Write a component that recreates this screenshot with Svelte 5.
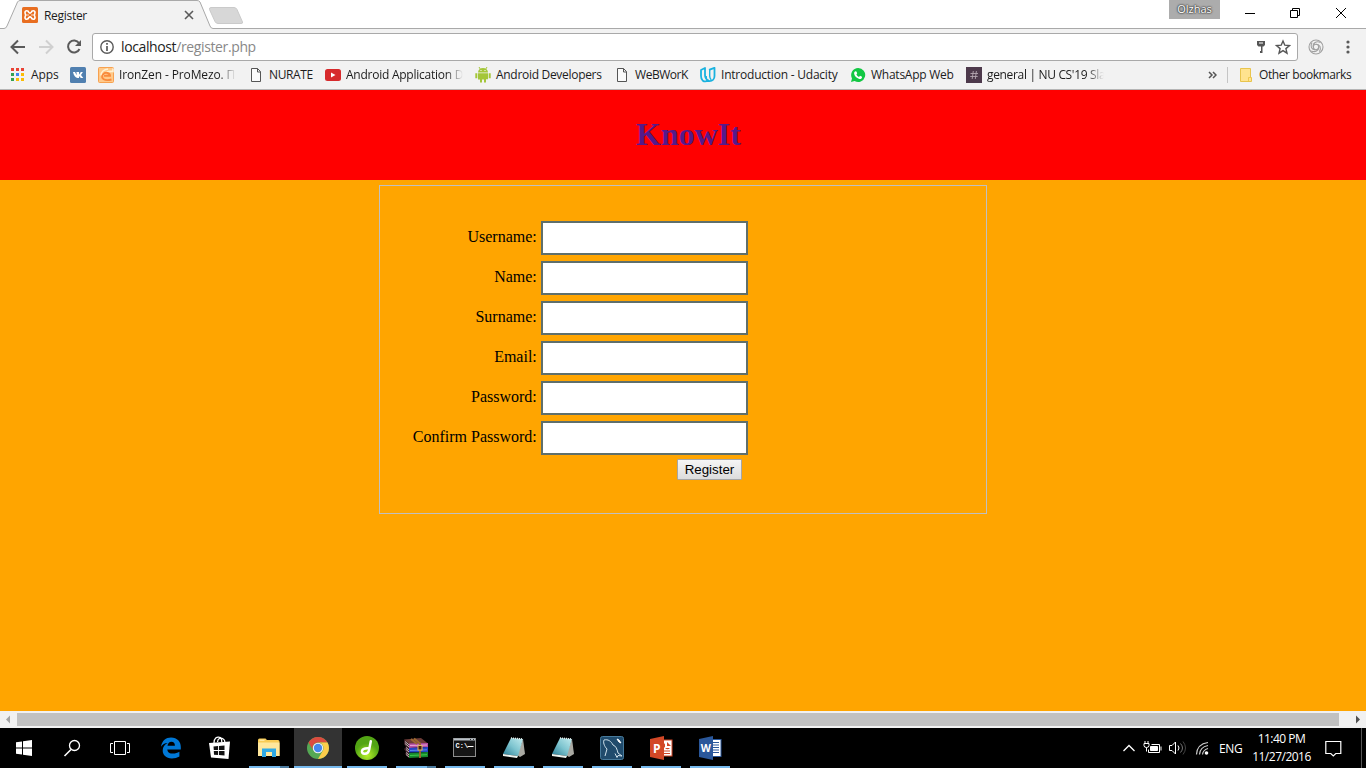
<script>
  const bookmarks = [
    { icon: 'apps', label: 'Apps', w: 27, ls: -0.1 },
    { icon: 'vk', label: '', w: 0 },
    { icon: 'iron', label: 'IronZen - ProMezo. Пр', w: 117, fade: true, ls: -0.12 },
    { icon: 'doc', label: 'NURATE', w: 44, ls: -0.4 },
    { icon: 'youtube', label: 'Android Application D', w: 117, fade: true, ls: -0.25 },
    { icon: 'android', label: 'Android Developers', w: 106, ls: -0.3 },
    { icon: 'doc', label: 'WeBWorK', w: 53, ls: -0.45 },
    { icon: 'udacity', label: 'Introduction - Udacity', w: 117, ls: -0.22 },
    { icon: 'whatsapp', label: 'WhatsApp Web', w: 83, ls: -0.25 },
    { icon: 'slack', label: "general | NU CS'19 Sla", w: 117, fade: true, ls: -0.33 }
  ];
  const appColors = ['#e94335', '#e94335', '#e94335', '#34a153', '#4285f4', '#fbbc05', '#34a153', '#fbbc05', '#fbbc05'];
  const fields = [
    { id: 'username', label: 'Username:', type: 'text' },
    { id: 'name', label: 'Name:', type: 'text' },
    { id: 'surname', label: 'Surname:', type: 'text' },
    { id: 'email', label: 'Email:', type: 'text' },
    { id: 'password', label: 'Password:', type: 'password' },
    { id: 'confirm', label: 'Confirm Password:', type: 'password' }
  ];
  const tasks = [
    { icon: 'edge' },
    { icon: 'store' },
    { icon: 'explorer', open: true, multi: true },
    { icon: 'chrome', open: true, active: true },
    { icon: 'disc', open: true },
    { icon: 'winrar', open: true, multi: true },
    { icon: 'cmd', open: true },
    { icon: 'notepad', open: true },
    { icon: 'notepad', open: true },
    { icon: 'mysql', open: true },
    { icon: 'ppt', open: true },
    { icon: 'word', open: true }
  ];
</script>

{#snippet bookmarkIcon(name)}
  <svg class="bm-icon" width="16" height="16" viewBox="0 0 16 16">
    {#if name === 'apps'}
      {#each appColors as c, i}
        <rect x={2 + (i % 3) * 5} y={1 + Math.floor(i / 3) * 5} width="3" height="3" fill={c} />
      {/each}
    {:else if name === 'vk'}
      <rect width="16" height="16" rx="1.5" fill="#5180b0" />
      <path d="M3 5h2l1.6 3.2V5.6L6 5h3v2.7L10.8 5h2.1L11 8l2.3 3h-2.4L9 9v2H7.700C5.400 11 3.800 8.500 3 5z" fill="#fff" />
    {:else if name === 'iron'}
      <rect x=".5" y=".5" width="15" height="15" rx="1" fill="#ffc98a" stroke="#f7a14f" />
      <path d="M15 1.500v3C9.500 4 6.500 6 5.500 9M3 8.500C3 5 6 2.500 10 2" fill="none" stroke="#fff1d4" stroke-width="1.600" />
      <path d="M6 8.800h6C12 6 7.500 4.500 5 7.500c-2.500 4 1.500 7 8.500 5" fill="none" stroke="#f98a3c" stroke-width="1.900" />
    {:else if name === 'doc'}
      <path d="M3.500 1.500h6l3 3v10h-9zM9.500 1.500v3.500h3" fill="#fafafa" stroke="#555" />
    {:else if name === 'youtube'}
      <rect y="2" width="16" height="12" rx="2.500" fill="#d72a2c" />
      <path d="M6 5.500v5l4.500-2.500z" fill="#fff" />
    {:else if name === 'android'}
      <path d="M3 5.500a5 4.500 0 0 1 10 0zM3 6.200h10v6H11V15.500H9v-3H7v3H5v-3H3zM.3 6.200h2v5h-2zM13.700 6.200h2v5h-2z" fill="#a4c639" />
      <path d="M4 0l1.500 2.500M12 0l-1.500 2.500" stroke="#a4c639" />
      <path d="M5.500 3h1v1h-1zM9.500 3h1v1h-1z" fill="#fff" />
    {:else if name === 'udacity'}
      <path d="M1 3l4-2v7c0 3 1.200 4.500 3.500 5.500C3.500 16 1 13 1 9zM9 2.800l5.500-2V9c0 3-2 5.200-5 5.200S6 12 6 9" fill="none" stroke="#19b2df" stroke-width="1.800" stroke-linejoin="round" />
      <path d="M9.700 3v6c0 2 .6 3 1.600 4" fill="none" stroke="#19b2df" stroke-width="1.400" />
    {:else if name === 'whatsapp'}
      <path d="M8.100 1a7 7 0 1 1-3.500 13L1 15l1-3.600A7 7 0 0 1 8.100 1z" fill="#12c743" />
      <path d="M5.300 4.300l1.100.1.800 1.900-.8 1.100c.6 1.200 1.400 1.900 2.600 2.500l1-1.100 2 .9c.2 1.800-1.300 2.500-2.700 2.200C6.500 11.200 4.600 9 4.200 7c-.2-1.200.2-2.200 1.100-2.700z" fill="#fff" />
    {:else if name === 'slack'}
      <rect width="16" height="16" fill="#4d394b" />
      <path d="M7.300 4L6.200 12M10.400 4L9.300 12M4.500 6.500h7.500M4.200 9.500h7.500" stroke="#b3a6b0" stroke-width=".9" />
    {:else if name === 'folder'}
      <path d="M2.500 1.500h10v9h1v4h-11z" fill="#ffe38f" stroke="#e8c44d" />
      <path d="M10.500 14v-3.500h2.500" fill="none" stroke="#f0c94f" />
    {/if}
  </svg>
{/snippet}

{#snippet taskIcon(name)}
  <svg width="24" height="24" viewBox="0 0 24 24">
    {#if name === 'edge'}
      <path d="M2 10.700C3 4.500 7 1.500 12 1.500c6.300 0 9.800 4.300 9.800 9.500v2.400H8.300c.3 3 2.700 4.200 5.900 4.200 2.200 0 4.200-.6 6.200-1.800v4.700c-2.200 1.300-4.700 1.900-7.500 1.900-6 0-9.200-3.300-9.200-7.800 0-3.500 1.900-6.200 5-7.500C5.500 7.200 3.500 8.500 2 10.700zM8.500 9.700h7.400c0-2.500-1.200-4-3.500-4S8.800 7.400 8.500 9.700z" fill="#0078d7" />
    {:else if name === 'store'}
      <path d="M6 7C6 2 9 .8 11 1.200c2 .3 2.800 2 2.800 5M9.500 6c.3-4 3.500-4.500 5.500-3.300C16.500 3.500 17 5 17 7" fill="none" stroke="#fff" stroke-width="1.300" />
      <path d="M1 7l21-1.500L20.500 23 3 21.500z" fill="#fff" />
      <path d="M5.500 10.500l4.600-.4v4H5.800zM11 10l5.500-.4V14H11zM5.800 15h4.300v4l-4.100-.3zM11 15h5.500v4.400L11 19z" fill="#111" />
    {:else if name === 'explorer'}
      <path d="M1 4q0-1.500 1.500-1.500h6L10 4h11q1.500 0 1.500 1.500V20H1z" fill="#f8cb55" />
      <path d="M1 6.500h21.500V20H1z" fill="#ffe79c" />
      <path d="M5 21v-8.500h14V21h-4v-5H9v5z" fill="#2fa9e5" />
      <path d="M2.500 4.200h5" stroke="#fff3c2" />
    {:else if name === 'chrome'}
      <circle cx="12" cy="12" r="11" fill="#55a854" />
      <path d="M2.500 6.500A11 11 0 0 1 21.500 6.500H12a5.500 5.500 0 0 0-4.760 8.250z" fill="#db4b3f" />
      <path d="M21.500 6.500A11 11 0 0 1 12 23l4.760-8.250A5.500 5.500 0 0 0 12 6.500z" fill="#fccd4b" />
      <circle cx="12" cy="12" r="5.200" fill="#f4f4f4" />
      <circle cx="12" cy="12" r="4.200" fill="#4587ed" />
    {:else if name === 'disc'}
      <defs><radialGradient id="green" cy=".8"><stop stop-color="#b7f02a" /><stop offset="1" stop-color="#52a414" /></radialGradient></defs>
      <circle cx="12" cy="12" r="12" fill="url(#green)" />
      <path d="M15.800 5.200l-1.600 8.300c-.6 3-2.500 4.300-4.700 4.200-2-.1-2.800-1.200-2.500-2.700.5-2.300 3-3 7-2.700" fill="none" stroke="#fff" stroke-width="2.500" stroke-linecap="round" />
    {:else if name === 'winrar'}
      <path d="M0 3.500L17 2l7 5.500-19 .5z" fill="#6d3b37" />
      <path d="M5 7.500l19-.5v4l-19 1z" fill="#b650a4" />
      <path d="M5 12l19-1v5l-19 .5z" fill="#2645c4" />
      <path d="M5 17l19-1v5L5 22z" fill="#17882c" />
      <path d="M6 9.500l17-.5" stroke="#e7a2d7" />
      <path d="M6 14.500l17-.7" stroke="#5c86ed" />
      <path d="M6 19.500l17-.8" stroke="#3ccb4d" />
      <path d="M0 3.500L5 8v14l-4-4 1-2-2-3 2-2-2-3z" fill="#41242d" />
      <path d="M1 5.500l4 3.300M1 7.500l4 3.300M2 11.500l3 2.500M2 13.500l3 2.500M2 16.500l3 2.500M2 18.500l3 2.500" stroke="#d6c8cb" stroke-width=".9" />
      <path d="M10 2.500l6 5V22M7 3l6 5" fill="none" stroke="#9c6830" stroke-width="1.900" />
      <rect x="14" y="9.500" width="4" height="4.500" fill="#44210b" stroke="#dfb469" />
    {:else if name === 'cmd'}
      <rect x=".5" y="2.500" width="22" height="18" fill="#151515" stroke="#8d8d8d" />
      <path d="M1 3.500h21" stroke="#b9c1c8" stroke-width="2" />
      <path d="M17 3.500h1M20 3.500h1" stroke="#333" />
      <text x="2.500" y="11.500" class="prompt">C:\</text>
      <path d="M14.500 10.500h6" stroke="#fff" />
    {:else if name === 'notepad'}
      <defs><linearGradient id="note" x1="1" y1="0" x2="0" y2="1"><stop stop-color="#c3ecef" /><stop offset=".5" stop-color="#7dc4cf" /><stop offset="1" stop-color="#287c95" /></linearGradient></defs>
      <path d="M21 3l2 15-5 3-3-2z" fill="#a9a9a2" />
      <path d="M9 2l12 1-5 17L1 18z" fill="url(#note)" />
      <path d="M1 18l15 2-1 2L1 20z" fill="#eef3ef" />
      <path d="M9 2l12 1" stroke="#e6efee" stroke-width="1.500" stroke-dasharray="1 1" />
    {:else if name === 'mysql'}
      <rect x=".5" y=".5" width="23" height="23" rx="2" fill="#204b6c" stroke="#477a9b" />
      <path d="M5 20L7 13C4 10 3 6 4 4c4-1 7 1 9 5 3 1 4 4 5 8l4 3-4-.5-1 2-2-4" fill="none" stroke="#cfe1eb" stroke-width="1" />
      <path d="M17 3l2 1 2 3-2-1z" fill="#fff" stroke="#fff" />
    {:else if name === 'ppt'}
      <rect x="12" y="4" width="11" height="16" fill="#fff" stroke="#d24726" />
      <path d="M18 6v4h4M16 7a3.500 3.500 0 1 0 5 5h-5z" fill="#d24726" />
      <path d="M14 15h7M14 17.500h7" stroke="#d24726" />
      <path d="M1 3l14-3v24L1 21z" fill="#d24726" />
      <text x="4" y="16.500" class="office">P</text>
    {:else if name === 'word'}
      <rect x="12" y="3.500" width="11" height="17" fill="#fff" stroke="#2a579a" />
      <path d="M14 6.500h7M14 9h7M14 11.500h7M14 14h7M14 16.500h7" stroke="#2a579a" />
      <path d="M1 3l14-3v24L1 21z" fill="#2a579a" />
      <text x="2.800" y="16" class="office w">W</text>
    {/if}
  </svg>
{/snippet}

<div class="screen">
  <header class="titlebar">
    <svg class="tabshape" width="1366" height="29" viewBox="0 0 1366 29">
      <path d="M0 28.500H4Q6 28.500 7 26L17.500 2Q18.500 .5 20 .5H197Q199 .5 200 2L210 26Q211 28.500 213 28.500H1366V29H0z" fill="#f2f2f2" />
      <path d="M0 28.500H4Q6 28.500 7 26L17.500 2Q18.500 .5 20 .5H197Q199 .5 200 2L210 26Q211 28.500 213 28.500H1366" fill="none" stroke="#a9a9a9" />
      <path d="M211 7.500h23q2 0 3 2l5.500 12.500q.5 1.500-1.500 1.500h-23q-2 0-3-2L209.500 9.500q-.5-2 1.500-2z" fill="#d7d7d7" stroke="#cacaca" />
    </svg>
    <div class="tab">
      <svg width="16" height="16" viewBox="0 0 16 16">
        <rect width="16" height="16" rx="1.500" fill="#e86e20" />
        <path d="M6.700 5.500Q6.500 3.800 4.700 3.800 3 3.800 3 5.800T4.500 8Q3 8.200 3 10.200t1.700 2 2-1.700M9.300 5.500q.2-1.700 2-1.700 1.700 0 1.700 2T11.500 8q1.500.2 1.500 2.200t-1.700 2-2-1.700M6.700 5.300Q8 7 9.300 5.300M6.700 10.700Q8 9 9.300 10.700M5.500 8h1M9.500 8h1" fill="none" stroke="#fff" stroke-width="1.600" />
      </svg>
      <span class="tab-title">Register</span>
      <svg width="10" height="10" viewBox="0 0 10 10"><path d="M1 1l8 8M9 1L1 9" stroke="#5a5a5a" stroke-width="1.600" /></svg>
    </div>
    <div class="window-controls">
      <span class="profile">Olzhas</span>
      <svg width="102" height="26" viewBox="0 0 102 26" fill="none" stroke="#000">
        <path d="M0 13.500h10M45.500 10.500h7v7h-7zM47.500 10v-1.500h7v7h-2M91 8l10 10M101 8L91 18" />
      </svg>
    </div>
  </header>

  <nav class="toolbar">
    <svg class="nav-icons" width="76" height="20" viewBox="0 0 76 20" fill="none" stroke-width="2">
      <path d="M16 10H3M9 3.500L2.500 10 9 16.500" stroke="#5a5a5a" />
      <path d="M30 10h13M37 3.500l6.500 6.500-6.500 6.500" stroke="#d0d0d0" />
      <path d="M70 6a6 6 0 1 0 .5 6" stroke="#5a5a5a" />
      <path d="M72 3v6h-6z" fill="#5a5a5a" />
    </svg>
    <div class="address">
      <svg width="14" height="14" viewBox="0 0 14 14"><circle cx="7" cy="7" r="6.200" fill="none" stroke="#5a5a5a" stroke-width="1.400" /><path d="M7 3v1.800M7 6v5" stroke="#5a5a5a" stroke-width="1.700" /></svg>
      <span class="url">localhost<i>/register.php</i></span>
      <svg width="36" height="18" viewBox="0 0 36 18">
        <path d="M2 3h8v4L8.500 8.500h-1V15H5V13h1V8.500H3.500L2 7z" fill="#555" /><path d="M4 5h4" stroke="#fff" />
        <path d="M28 3l1.800 4.200 4.700.4-3.600 3 1.100 4.600-4-2.500-4 2.500 1.100-4.600-3.600-3 4.700-.4z" fill="none" stroke="#555" stroke-width="1.400" />
      </svg>
    </div>
    <svg class="ext" width="16" height="16" viewBox="0 0 16 16" fill="none" stroke="#a0a0a0" stroke-width="1.100">
      <circle cx="8" cy="8" r="7" /><circle cx="8" cy="8" r="2.700" /><path d="M5.300 8C4.500 4 8.500 1.500 12.500 3.500M8 5.300c4 0 5.500 3.500 3.500 7.500M10.700 8c0 4-3.500 5.500-7.500 4M7 10.600C3.500 11 2 7 4 3.500" />
    </svg>
    <svg class="dots" width="4" height="14" viewBox="0 0 4 14" fill="#5a5a5a"><circle cx="2" cy="2" r="1.600" /><circle cx="2" cy="7" r="1.600" /><circle cx="2" cy="12" r="1.600" /></svg>
  </nav>

  <nav class="bookmarks">
    {#each bookmarks as b}
      <div class="bookmark">
        {@render bookmarkIcon(b.icon)}
        {#if b.label}
          <span class:fade={b.fade} style="width:{b.w}px;letter-spacing:{b.ls}px">{b.label}</span>
        {/if}
      </div>
    {/each}
    <div class="other">
      <svg width="9" height="8" viewBox="0 0 9 8" fill="none" stroke="#555" stroke-width="1.500"><path d="M1 1l3 3-3 3M5 1l3 3-3 3" /></svg>
      <i class="divider"></i>
      {@render bookmarkIcon('folder')}
      <span>Other bookmarks</span>
    </div>
  </nav>

  <main>
    <div class="banner"><h1>KnowIt</h1></div>
    <form onsubmit={(e) => e.preventDefault()}>
      {#each fields as f}
        <div class="row">
          <label for={f.id}>{f.label}</label>
          <input id={f.id} type={f.type} />
        </div>
      {/each}
      <button>Register</button>
    </form>
  </main>

  <div class="scrollbar">
    <svg width="17" height="17" viewBox="0 0 17 17"><path d="M10 4.500v8L6 8.500z" fill="#a3a3a3" /></svg>
    <div class="thumb"></div>
    <svg width="17" height="17" viewBox="0 0 17 17"><path d="M7 4.500v8l4-4z" fill="#505050" /></svg>
  </div>

  <footer>
    <svg class="system" width="147" height="40" viewBox="0 0 147 40">
      <path d="M16 14.300l6-.8v6H16zM23 13.300l9-1.300v7.500h-9zM16 20.500h6v6l-6-.8zM23 20.500h9V28l-9-1.300z" fill="#fff" />
      <g fill="none" stroke="#fff"><circle cx="74.500" cy="17.500" r="5" stroke-width="1.300" /><path d="M71 21.500L64.500 28" stroke-width="1.600" /><path d="M114.500 13.500h11v13h-11zM113 15.500h-2.500v9h2.500M127 15.500h2.500v9H127" /></g>
    </svg>
    <div class="tasks">
      {#each tasks as t}
        <div class="task" class:open={t.open} class:active={t.active} class:multi={t.multi}>{@render taskIcon(t.icon)}</div>
      {/each}
    </div>
    <div class="tray">
      <svg width="90" height="40" viewBox="0 0 90 40" fill="none" stroke="#fff">
        <path d="M1.500 23L7 17.500l5.500 5.500" stroke-width="1.300" />
        <path d="M29.500 16.500h8v8h-11v-3M39 18.500v4" /><path d="M28.500 18.500h7v4h-7z" fill="#fff" />
        <path d="M23 13v2.500M26 13v2.500M22 15.500h5v2q0 2-2.500 2t-2.500-2zM24.500 19.500v4" />
        <path d="M47.500 17.500h2.500l3.500-3.500v12L50 22.500h-2.500z" /><path d="M56 17.500q2 2.500 0 5" /><path d="M58.500 15.500q4 4.500 0 9" stroke="#777" /><path d="M61 13.500q5 6.500 0 13" stroke="#444" />
        <path d="M74.500 26.500Q75 16 86 14.500M77.500 26.500Q78 19 86 17.500M80.500 26.500Q81 22 86 20.500" stroke="#ccc" stroke-width="1.200" /><circle cx="84.500" cy="25" r="1.800" fill="#fff" stroke="none" />
      </svg>
      <span class="lang">ENG</span>
      <span class="clock">11:40 PM<br />11/27/2016</span>
      <svg class="notice" width="17" height="17" viewBox="0 0 17 17" fill="none" stroke="#fff"><path d="M.8 1.500h15v12h-5L8.300 16l-2.500-2.500h-5z" stroke-width="1.200" /></svg>
      <i class="desktop"></i>
    </div>
  </footer>
</div>

<style>
  :global(body) { margin: 0; overflow: hidden; }
  .screen { width: 1366px; height: 768px; display: flex; flex-direction: column; overflow: hidden; font: 12px 'Open Sans', 'Noto Sans', sans-serif; color: #1c1c1c; }
  svg { display: block; flex: none; }
  i { font-style: normal; }
  .titlebar { height: 29px; display: grid; grid-template-columns: 1fr auto; background: #fff; }
  .tabshape { grid-area: 1 / 1 / 2 / 3; }
  .tab { grid-area: 1 / 1; display: flex; align-items: center; padding: 1px 0 0 22px; width: 172px; }
  .tab-title { flex: 1; padding-left: 6px; letter-spacing: -0.3px; }
  .window-controls { grid-area: 1 / 2; display: flex; align-items: flex-start; gap: 25px; padding-right: 19px; }
  .profile { width: 51px; height: 19px; background: #acacac; color: #fff; text-align: center; font-size: 11px; line-height: 18px; text-shadow: 0 0 2px #333, 0 0 1px #333, 0 0 2px #444; }
  .toolbar { height: 36px; display: flex; align-items: center; padding-left: 9px; background: #f2f2f2; box-sizing: border-box; }
  .address { flex: none; display: flex; align-items: center; box-sizing: border-box; width: 1206px; height: 28px; margin-left: 7px; border: 1px solid #a9a9a9; border-radius: 3px; background: #fff; padding: 0 6px 0 7px; }
  .url { flex: 1; font-size: 14px; line-height: 18px; padding: 0 0 1px 7px; letter-spacing: -0.38px; color: #222; }
  .url i { color: #888; }
  .ext { margin-left: 10px; }
  .dots { margin-left: 22px; }
  .bookmarks { height: 25px; display: flex; align-items: center; gap: 12px; background: #f2f2f2; border-bottom: 1px solid #b5b5b5; box-sizing: border-box; padding: 0 14px 5px 9px; white-space: nowrap; }
  .bookmark { display: flex; align-items: center; gap: 5px; }
  .bookmark:first-child { gap: 6px; }
  .bookmark span { line-height: 18px; }
  .bookmark .fade { overflow: hidden; mask-image: linear-gradient(90deg, #000 85%, transparent); }
  .other { display: flex; align-items: center; margin-left: auto; letter-spacing: -0.42px; }
  .divider { width: 1px; height: 16px; background: #c5c5c5; margin: 0 10px; }
  .other span { width: 93px; margin-left: 5px; }
  main { height: 621px; background: #ffa500; font-family: 'Liberation Serif', 'Times New Roman', serif; color: #000; }
  .banner { height: 90px; background: #f00; display: flex; justify-content: center; align-items: center; padding: 0 0 2px 11px; box-sizing: border-box; }
  h1 { margin: 0; font-size: 32px; line-height: 37px; color: #551a8b; }
  form { width: 608px; height: 329px; box-sizing: border-box; margin: 5px auto 0; border: 1px solid #c0c0c0; padding: 35px 0 0 0; }
  .row { display: flex; height: 34px; margin-bottom: 6px; }
  label { width: 156.8px; text-align: right; margin-right: 4.2px; font-size: 16px; line-height: 32px; }
  input { width: 207px; height: 34px; box-sizing: border-box; border: 2px solid #5f6f6b; background: #fff; padding: 0 4px; border-radius: 0; outline: none; }
  button { display: block; width: 65px; height: 21px; margin: -2px 0 0 297px; padding: 0; border: 1px solid #a6a6a6; border-radius: 1px; background: linear-gradient(#f5f5f5, #dcdcdc); font: 13.33px 'Liberation Sans', Arial, sans-serif; color: #000; }
  .scrollbar { height: 17px; display: flex; align-items: center; background: #f1f1f1; }
  .thumb { width: 1322px; height: 13px; background: #c1c1c1; margin-right: 10px; }
  footer { height: 40px; background: #000; color: #fff; display: flex; }
  .tasks { display: flex; }
  .task { width: 49px; height: 40px; box-sizing: border-box; display: flex; justify-content: center; align-items: center; }
  .task:first-child, .task:nth-child(2) { padding-right: 2px; }
  .open { margin: 0 5px 0 4px; width: 40px; border-bottom: 2px solid #76b9ed; padding: 2px 1px 0 0; }
  .multi { border-bottom: 0; padding-bottom: 2px; background: linear-gradient(90deg, #76b9ed 31px, #4c7b9f 31px) bottom / 100% 2px no-repeat; }
  .active { margin: 0 1px 0 0; width: 48px; background: #333; }
  .prompt { font: bold 7px 'Liberation Mono', monospace; fill: #fff; }
  .office { font: bold 12px 'Open Sans', sans-serif; fill: #fff; }
  .office.w { font-size: 10.5px; }
  .tray { display: flex; align-items: center; margin-left: auto; }
  .lang { width: 24px; margin-left: 7px; letter-spacing: -0.4px; }
  .clock { width: 73px; margin-left: 2px; text-align: center; line-height: 18px; letter-spacing: -0.5px; white-space: nowrap; }
  .notice { margin-left: 7px; }
  .desktop { width: 1px; height: 40px; background: #555; margin: 0 4px 0 19px; }
</style>
